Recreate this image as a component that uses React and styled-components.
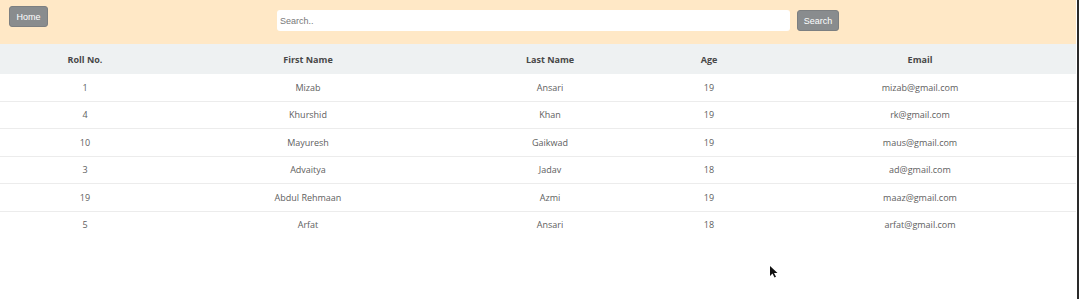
import React from "react";
import styled, { createGlobalStyle } from "styled-components";

const GlobalStyle = createGlobalStyle`
  body {
    margin: 0;
    background: #ffffff;
    font-family: "Open Sans", "Noto Sans", sans-serif;
  }
`;

const Page = styled.div`
  position: relative;
  width: 1077px;
  height: 299px;
  border-right: 2px solid #2a2a2a;
  background: #ffffff;
  overflow: hidden;
`;

const Navbar = styled.div`
  width: 1076px;
  height: 44px;
  background-color: #ffe8c6;
  display: flex;
  align-items: flex-start;
  box-sizing: border-box;
`;

const GreyButton = styled.button`
  background-color: #898c8e;
  color: #ffffff;
  border: 1px solid #7c7f81;
  border-radius: 3px;
  font-family: "Liberation Sans", Arial, sans-serif;
  font-size: 9px;
  padding: 0;
  width: ${(p) => p.w}px;
  height: 21px;
  margin-top: ${(p) => p.top}px;
  cursor: pointer;
`;

const SearchArea = styled.div`
  display: flex;
  margin-top: 10px;
  margin-left: 229px;
  gap: 7px;
`;

const SearchInput = styled.input`
  width: 513px;
  height: 21px;
  box-sizing: border-box;
  border: none;
  border-radius: 3px;
  padding: 0 3px;
  font-family: "Liberation Sans", Arial, sans-serif;
  font-size: 9px;
  color: #333;
  background: #ffffff;
  outline: none;

  &::placeholder {
    color: #777;
  }
`;

const HomeWrap = styled.div`
  margin-left: 9px;
`;

const Table = styled.table`
  width: 1076px;
  border-collapse: collapse;
  table-layout: fixed;
`;

const HeadCell = styled.th`
  width: ${(p) => p.w}px;
  height: 30px;
  background-color: #eef1f2;
  color: #484848;
  font-size: 9px;
  font-weight: 700;
  text-align: center;
  padding: 0;
`;

const Row = styled.tr`
  border-top: ${(p) => (p.first ? "none" : "1px solid #ececec")};
`;

const Cell = styled.td`
  height: 26.5px;
  color: #606060;
  font-size: 9px;
  text-align: center;
  padding: 0;
`;

const Cursor = styled.svg`
  position: absolute;
  left: 769px;
  top: 266px;
`;

const columns = [
  { label: "Roll No.", w: 170 },
  { label: "First Name", w: 276 },
  { label: "Last Name", w: 208 },
  { label: "Age", w: 110 },
  { label: "Email", w: 312 },
];

const students = [
  ["1", "Mizab", "Ansari", "19", "mizab@gmail.com"],
  ["4", "Khurshid", "Khan", "19", "rk@gmail.com"],
  ["10", "Mayuresh", "Gaikwad", "19", "maus@gmail.com"],
  ["3", "Advaitya", "Jadav", "18", "ad@gmail.com"],
  ["19", "Abdul Rehmaan", "Azmi", "19", "maaz@gmail.com"],
  ["5", "Arfat", "Ansari", "18", "arfat@gmail.com"],
];

const App = () => {
  return (
    <Page>
      <GlobalStyle />
      <Navbar>
        <HomeWrap>
          <GreyButton w={39} top={6}>
            Home
          </GreyButton>
        </HomeWrap>
        <SearchArea>
          <SearchInput placeholder="Search.." />
          <GreyButton w={42} top={0}>
            Search
          </GreyButton>
        </SearchArea>
      </Navbar>
      <Table>
        <thead>
          <tr>
            {columns.map((c) => (
              <HeadCell key={c.label} w={c.w}>
                {c.label}
              </HeadCell>
            ))}
          </tr>
        </thead>
        <tbody>
          {students.map((s, i) => (
            <Row key={s[0]} first={i === 0}>
              {s.map((v, j) => (
                <Cell key={j}>{v}</Cell>
              ))}
            </Row>
          ))}
        </tbody>
      </Table>
      <Cursor width="9" height="12" viewBox="0 0 9 12">
        <path d="M1 0 L1 10 L3.5 7.5 L5.5 11.5 L7 10.8 L5 7 L8.5 7 Z" fill="#111" />
      </Cursor>
    </Page>
  );
};

export default App;
